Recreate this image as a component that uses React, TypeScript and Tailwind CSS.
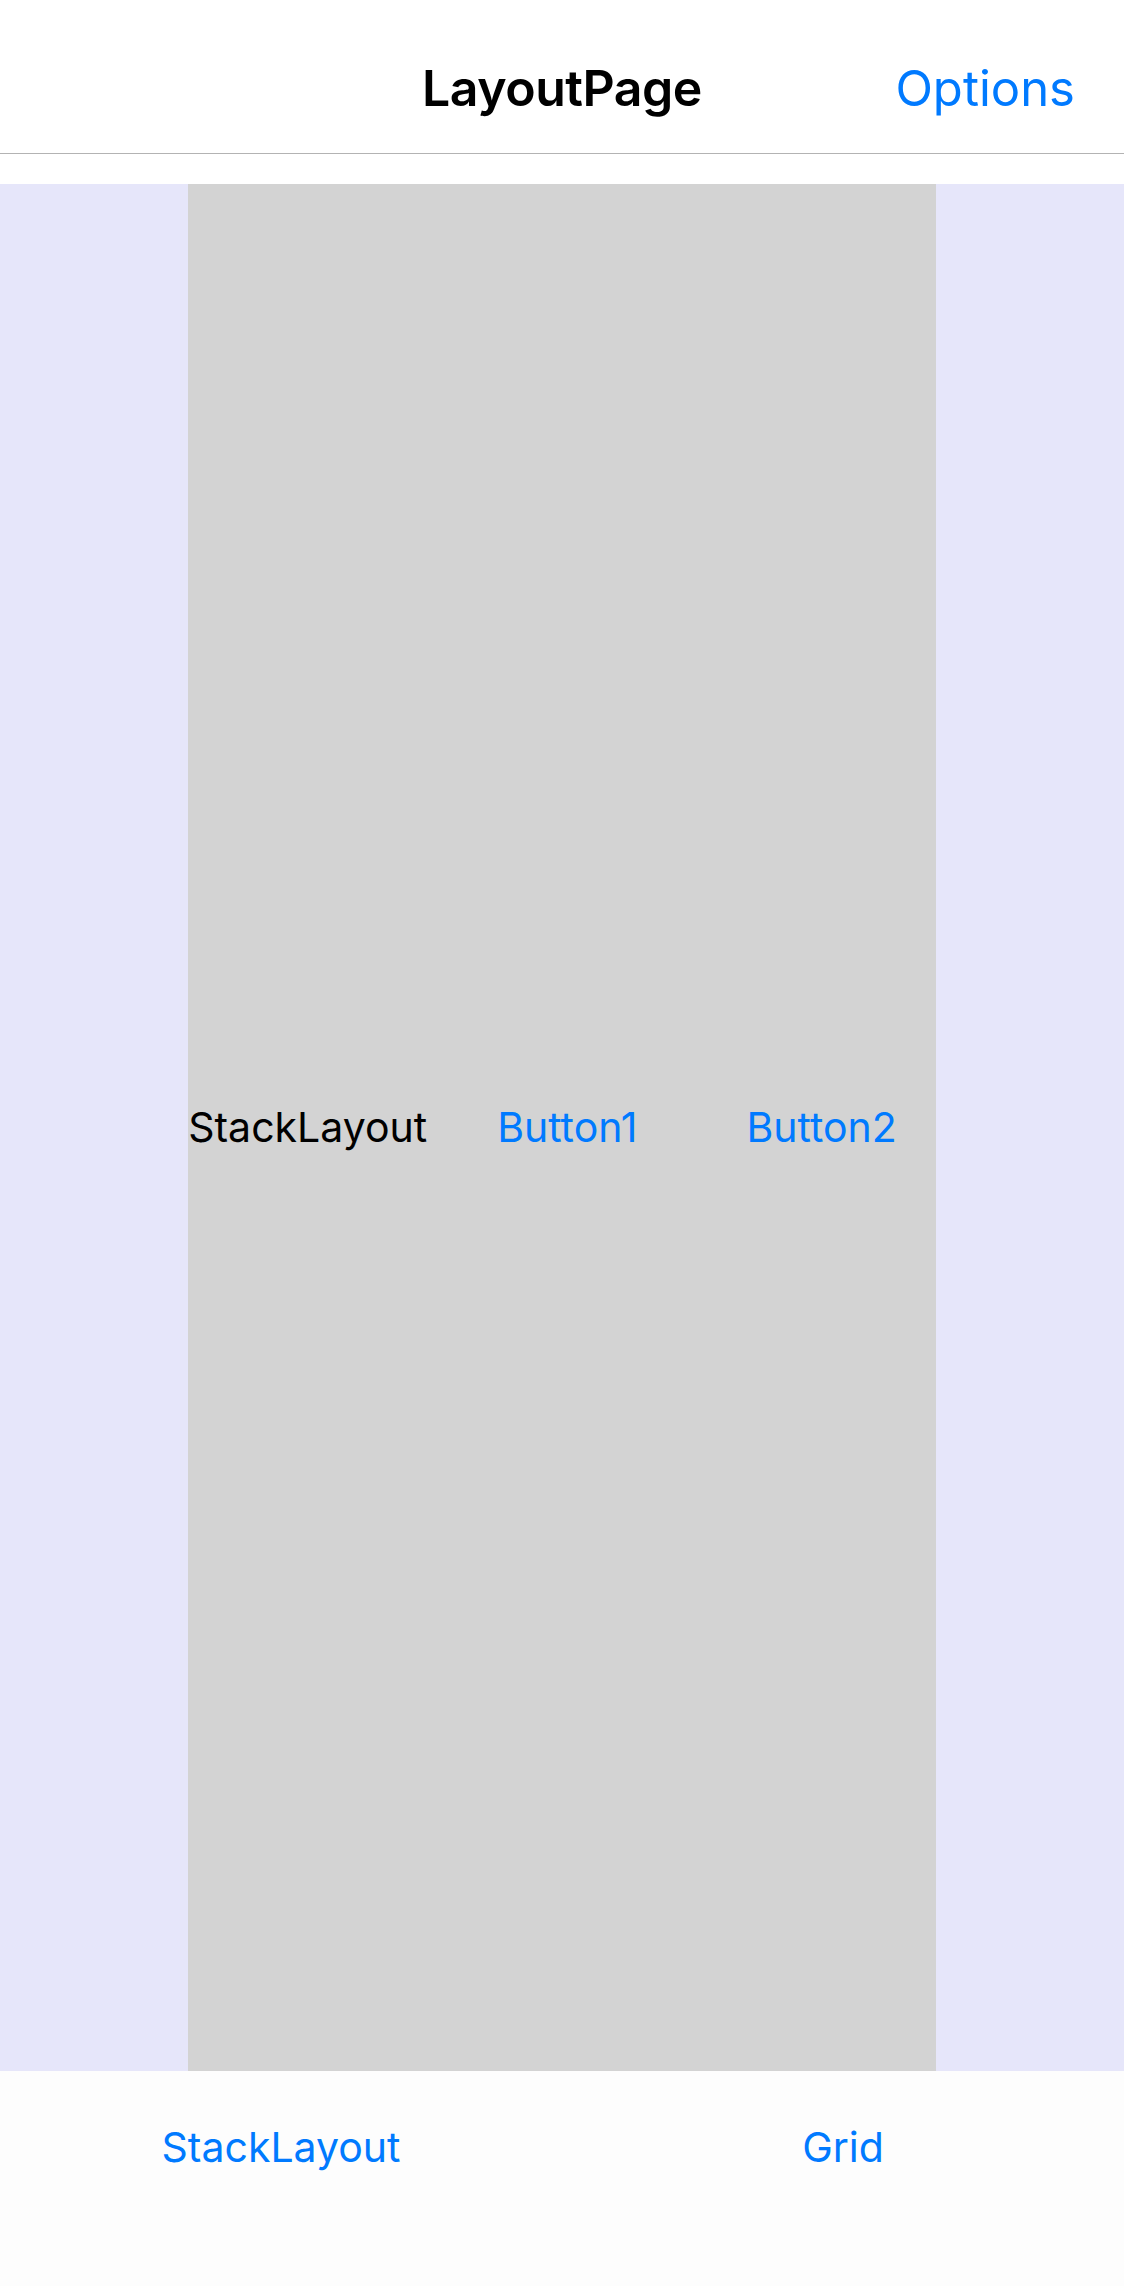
import React from 'react';

const App: React.FC = () => {
    return (
        <div className="h-[2286px] w-full flex flex-col bg-white font-['Inter','Liberation_Sans',sans-serif]">
            {/* nav bar */}
            <div className="h-[154px] border-b border-[#b3b3b3] bg-white grid grid-cols-3 items-center pt-[24px]">
                <div />
                <h1 className="text-center text-[50px] font-semibold text-black tracking-[-0.5px]">LayoutPage</h1>
                <div className="flex justify-end pr-[49px]">
                    <button className="text-[49px] text-[#007aff]">Options</button>
                </div>
            </div>

            {/* page content */}
            <div className="flex-1 mt-[30px] bg-[#e6e6fa] flex justify-center">
                <div className="bg-[#d3d3d3] flex items-center gap-[31px]">
                    <span className="text-[41px] text-black">StackLayout</span>
                    <button className="text-[41px] text-[#007aff] px-[39px]">Button1</button>
                    <button className="text-[41px] text-[#007aff] px-[39px]">Button2</button>
                </div>
            </div>

            {/* tab bar */}
            <div className="h-[215px] bg-[#fdfdfd]">
                <div className="h-[153px] grid grid-cols-2 items-center">
                    <button className="text-[41px] text-[#007aff]">StackLayout</button>
                    <button className="text-[41px] text-[#007aff]">Grid</button>
                </div>
            </div>
        </div>
    );
};

export default App;
